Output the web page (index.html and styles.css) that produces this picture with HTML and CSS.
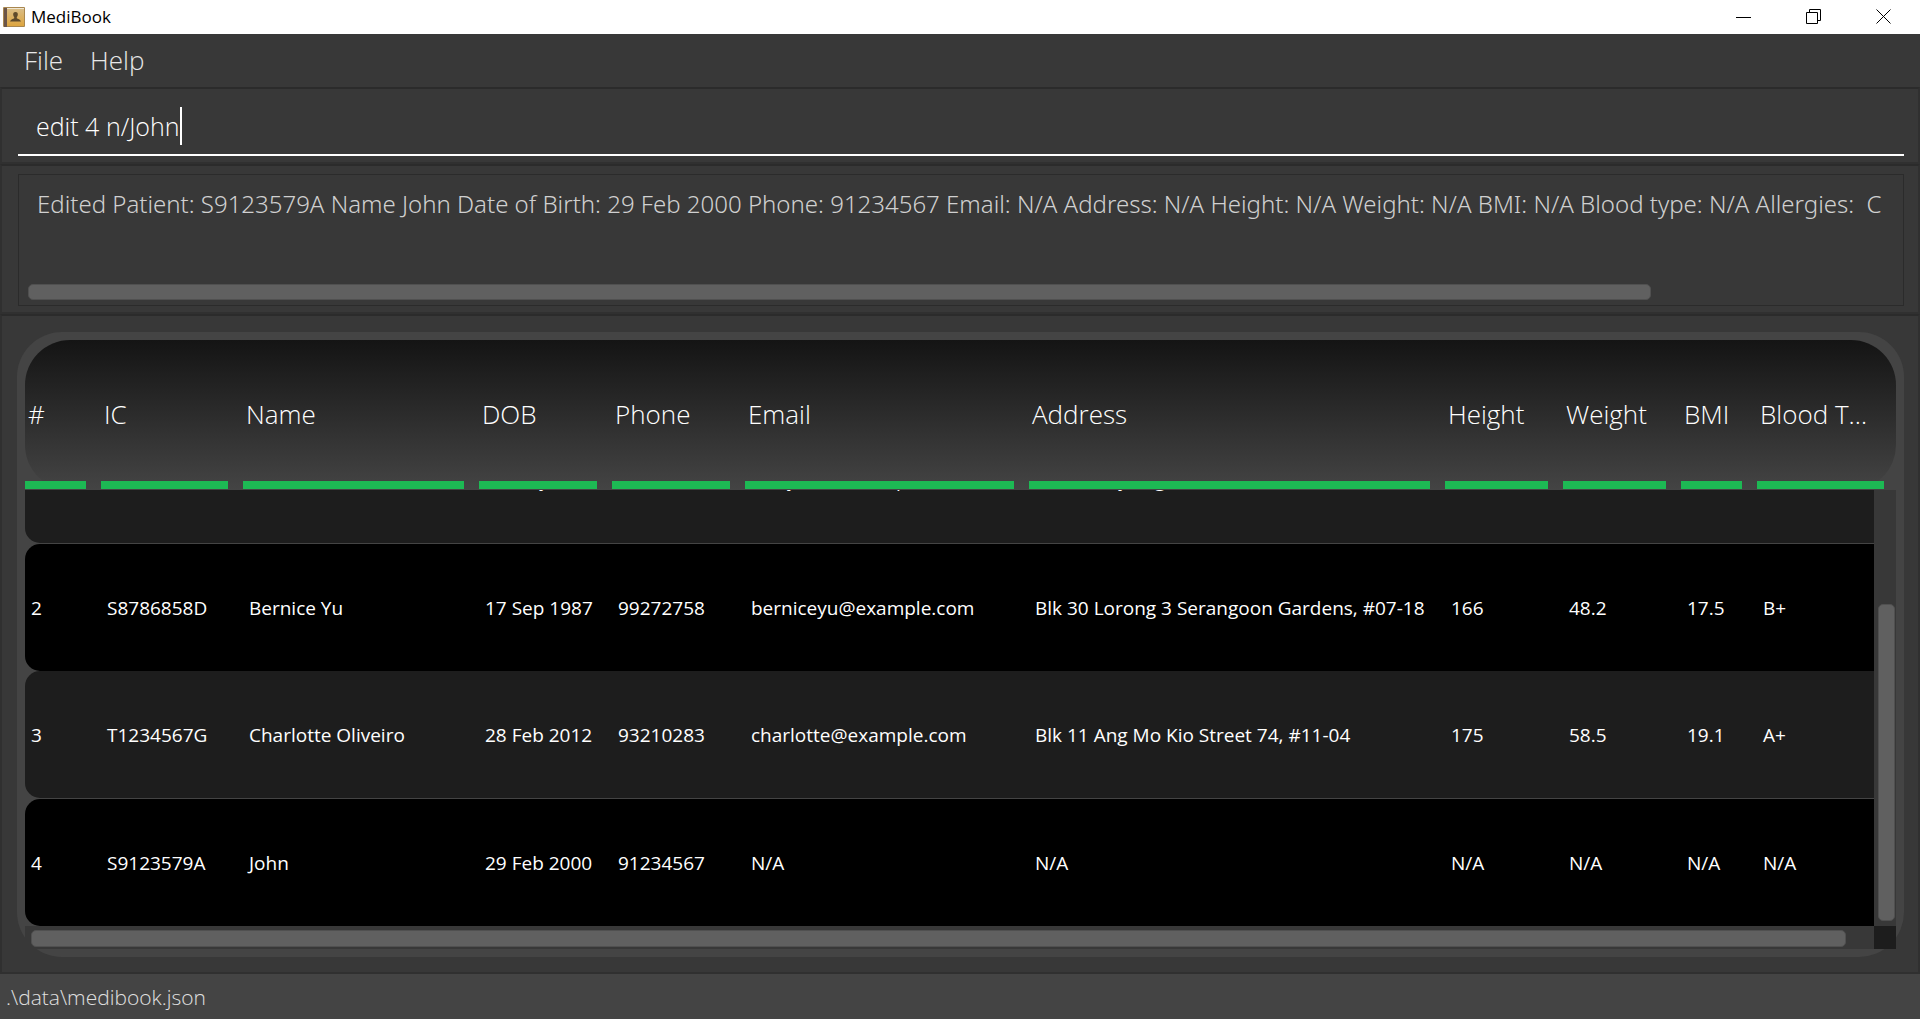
FILE: index.html
```html
<!DOCTYPE html>
<html lang="en">
<head>
<meta charset="utf-8">
<meta name="viewport" content="width=device-width, initial-scale=1">
<title>MediBook</title>
<link rel="stylesheet" href="styles.css">
</head>
<body>
<div class="window">
  <header class="title-bar">
    <svg class="app-icon" viewBox="0 0 22 21" aria-hidden="true">
      <defs>
        <linearGradient id="cover" x1="0" y1="0" x2="0" y2="1">
          <stop offset="0" stop-color="#d9bc84"/>
          <stop offset="1" stop-color="#dda53f"/>
        </linearGradient>
      </defs>
      <rect x="0" y="0" width="22" height="20" rx="1" fill="#a9874f"/>
      <rect x="4" y="2" width="17" height="17" fill="url(#cover)"/>
      <rect x="1" y="1" width="3" height="19" fill="#6b5548"/>
      <rect x="4" y="1" width="17" height="1" fill="#efe6d2"/>
      <path d="M12.500 5c-1.800 0-2.500 1.300-2.300 2.800.1 1.200.6 1.800 1 2.300v1.200c-.8.8-3.700 1-4.200 3.200h11c-.5-2.200-3.400-2.400-4.200-3.200v-1.200c.4-.5.9-1.100 1-2.300C15 6.300 14.300 5 12.500 5z" fill="#5e4a2b"/>
    </svg>
    <h1 class="app-name">MediBook</h1>
    <div class="window-controls">
      <button class="window-button" aria-label="Minimize"><svg viewBox="0 0 16 16"><path d="M0 8.500h15"/></svg></button>
      <button class="window-button" aria-label="Restore"><svg viewBox="0 0 16 16"><path d="M.5 3.500h11v11H.5zM3.500 3.500v-3h11v11h-3"/></svg></button>
      <button class="window-button" aria-label="Close"><svg viewBox="0 0 16 16"><path d="M.5.5l14 14M14.500.5l-14 14"/></svg></button>
    </div>
  </header>

  <nav class="menu-bar">
    <button class="menu">File</button>
    <button class="menu">Help</button>
  </nav>

  <form class="pane command-pane">
    <div class="command-line">
      <input class="command-input" type="text" value="edit 4 n/John" aria-label="Command" spellcheck="false">
      <span class="caret"></span>
    </div>
  </form>

  <section class="pane result-pane">
    <div class="result-box">
      <textarea class="result-text" readonly rows="1" wrap="off" aria-label="Result">Edited Patient: S9123579A Name John Date of Birth: 29 Feb 2000 Phone: 91234567 Email: N/A Address: N/A Height: N/A Weight: N/A BMI: N/A Blood type: N/A Allergies:  C</textarea>
      <div class="scroll-track scroll-track-result"><div class="thumb" style="width: 86.7%"></div></div>
    </div>
  </section>

  <main class="pane table-pane">
    <div class="table-card">
      <table class="patients">
        <thead class="patients-head">
          <tr class="row">
            <th>#</th><th>IC</th><th>Name</th><th>DOB</th><th>Phone</th><th>Email</th><th>Address</th><th>Height</th><th>Weight</th><th>BMI</th><th>Blood Type</th>
          </tr>
        </thead>
        <tbody class="patients-body">
          <tr class="row">
            <td>1</td><td>S9234567A</td><td>Alex Yeoh</td><td>27 May 1999</td><td>87438807</td><td>alexyeoh@example.com</td><td>Blk 30 Geylang Street 29, #06-40</td><td>170</td><td>65.3</td><td>22.6</td><td>A+</td>
          </tr>
          <tr class="row">
            <td>2</td><td>S8786858D</td><td>Bernice Yu</td><td>17 Sep 1987</td><td>99272758</td><td>berniceyu@example.com</td><td>Blk 30 Lorong 3 Serangoon Gardens, #07-18</td><td>166</td><td>48.2</td><td>17.5</td><td>B+</td>
          </tr>
          <tr class="row">
            <td>3</td><td>T1234567G</td><td>Charlotte Oliveiro</td><td>28 Feb 2012</td><td>93210283</td><td>charlotte@example.com</td><td>Blk 11 Ang Mo Kio Street 74, #11-04</td><td>175</td><td>58.5</td><td>19.1</td><td>A+</td>
          </tr>
          <tr class="row">
            <td>4</td><td>S9123579A</td><td>John</td><td>29 Feb 2000</td><td>91234567</td><td>N/A</td><td>N/A</td><td>N/A</td><td>N/A</td><td>N/A</td><td>N/A</td>
          </tr>
        </tbody>
      </table>
      <div class="scroll-track scroll-track-vertical"><div class="thumb" style="height: 73.5%"></div></div>
      <div class="scroll-track scroll-track-horizontal"><div class="thumb" style="width: 99%"></div></div>
      <div class="scroll-corner"></div>
    </div>
  </main>

  <footer class="status-bar">.\data\medibook.json</footer>
</div>
</body>
</html>
```
FILE: styles.css
```css
:root {
  --base: #383838;
  --edge: #2b2b2b;
  --raised: #444444;
  --thumb: #606060;
  --accent: #1db954;
  --columns: 76fr 142fr 236fr 133fr 133fr 284fr 416fr 118fr 118fr 76fr 142fr;
}

* {
  box-sizing: border-box;
}

body {
  margin: 0;
  background: #ffffff;
  color: #ffffff;
  font-family: "Open Sans", "Noto Sans", sans-serif;
}

button,
input,
textarea {
  margin: 0;
  padding: 0;
  border: 0;
  background: none;
  color: inherit;
  font: inherit;
  outline: none;
}

.window {
  display: flex;
  flex-direction: column;
  height: 100vh;
  padding-bottom: 1px;
}

/* Title bar */
.title-bar {
  display: flex;
  align-items: center;
  height: 34px;
  padding: 0 1px 0 3px;
  background: #ffffff;
  color: #000000;
}

.app-icon {
  width: 22px;
  height: 21px;
}

.app-name {
  margin: 0 auto 0 6px;
  font-size: 17px;
  font-weight: 400;
  line-height: 26px;
}

.window-controls {
  display: flex;
}

.window-button {
  display: flex;
  align-items: center;
  justify-content: center;
  width: 70px;
  height: 34px;
}

.window-button svg {
  width: 16px;
  height: 16px;
  fill: none;
  stroke: #000000;
}

/* Menu */
.menu-bar {
  display: flex;
  gap: 27px;
  height: 53px;
  padding: 0 24px 2px;
  background: var(--base);
}

.menu {
  color: #e8e8e8;
  font-size: 26px;
  font-weight: 300;
}

/* Panes */
.pane {
  border: 2px solid #303030;
  border-top-color: var(--edge);
  background: var(--base);
}

.command-pane {
  padding: 17px 14px 6px 16px;
}

.command-line {
  display: flex;
  align-items: center;
  height: 50px;
  padding: 0 18px 8px;
  border-bottom: 2px solid #ffffff;
}

.command-input {
  field-sizing: content;
  font-size: 25px;
  font-weight: 300;
}

.caret {
  width: 2px;
  height: 38px;
  background: #ffffff;
}

.result-pane {
  padding: 8px 14px 6px 16px;
}

.result-box {
  display: flex;
  flex-direction: column;
  justify-content: space-between;
  height: 132px;
  padding: 9px 3px 5px 9px;
  border: 1px solid var(--edge);
}

.result-text {
  width: 100%;
  height: 40px;
  padding-left: 9px;
  overflow: hidden;
  resize: none;
  white-space: pre;
  color: #d0d0d0;
  font-family: "Noto Sans", "Open Sans", sans-serif;
  font-size: 24px;
  font-weight: 300;
  line-height: 40px;
}

/* Scroll bars */
.scroll-track {
  display: flex;
  background: var(--base);
}

.thumb {
  border: 1px solid #505050;
  border-radius: 5px;
  background: var(--thumb);
}

.scroll-track-result {
  height: 16px;
}

.scroll-track-vertical {
  align-items: flex-end;
  padding: 0 1px 5px 4px;
}

.scroll-track-vertical .thumb {
  width: 100%;
}

.scroll-track-horizontal {
  padding: 4px 10px 2px 6px;
}

.scroll-corner {
  background: #1d1d1d;
}

/* Patient table */
.table-pane {
  display: flex;
  flex: 1;
  min-height: 0;
  padding: 16px 14px 15px 15px;
}

.table-card {
  display: grid;
  flex: 1;
  grid-template-columns: minmax(0, 1fr) 22px;
  grid-template-rows: 150px minmax(0, 1fr) 23px;
  min-width: 0;
  padding: 8px;
  border-radius: 45px;
  background: var(--raised);
}

.patients {
  display: contents;
}

.patients-head {
  display: block;
  grid-column: 1 / 3;
  min-width: 0;
  border-radius: 45px;
  background: linear-gradient(#141414, #444444);
}

.patients-body {
  display: flex;
  flex-direction: column;
  justify-content: flex-end;
  min-width: 0;
  overflow: hidden;
}

.row {
  display: grid;
  flex: none;
  grid-template-columns: var(--columns);
}

.patients-head .row {
  width: calc(100% + 3px);
  height: 149px;
}

.patients-body .row {
  width: calc(100% + 25px);
  height: 127px;
  border-radius: 15px;
  background: #000000;
}

.patients-body .row:nth-child(odd) {
  margin-bottom: 1px;
  background: #1d1d1d;
}

.row th,
.row td {
  min-width: 0;
  overflow: hidden;
  text-align: left;
  text-overflow: ellipsis;
  white-space: nowrap;
}

.row th {
  margin-right: 15px;
  padding: 0 12px 0 3px;
  border-bottom: 8px solid var(--accent);
  font-size: 26px;
  font-weight: 300;
  line-height: 148px;
}

.row td {
  padding: 0 6px;
  font-size: 19px;
  line-height: 129px;
}

.status-bar {
  height: 45px;
  padding-left: 6px;
  background: var(--raised);
  color: #e0e0e0;
  font-size: 21px;
  font-weight: 300;
  line-height: 47px;
}
```
